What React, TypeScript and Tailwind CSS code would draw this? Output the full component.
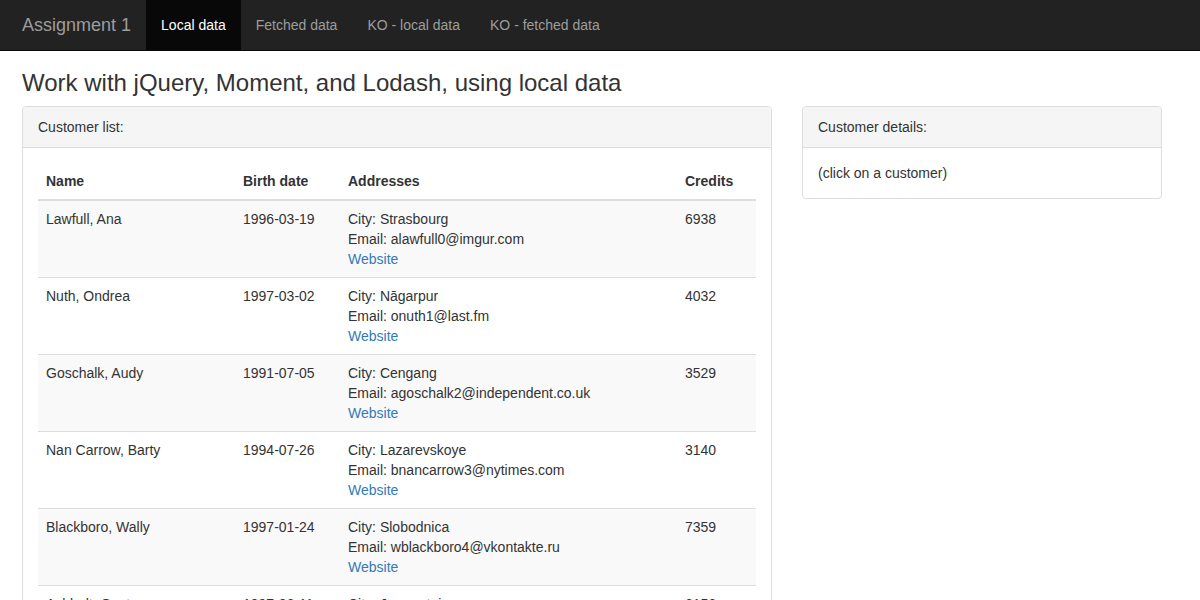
import React from "react";

// Bootstrap 3 look: navbar-inverse + two panels (customer list / details)

type Customer = {
  name: string;
  birth: string;
  city: string;
  email: string;
  credits: number;
};

const customers: Customer[] = [
  { name: "Lawfull, Ana", birth: "1996-03-19", city: "Strasbourg", email: "alawfull0@imgur.com", credits: 6938 },
  { name: "Nuth, Ondrea", birth: "1997-03-02", city: "Nāgarpur", email: "onuth1@last.fm", credits: 4032 },
  { name: "Goschalk, Audy", birth: "1991-07-05", city: "Cengang", email: "agoschalk2@independent.co.uk", credits: 3529 },
  { name: "Nan Carrow, Barty", birth: "1994-07-26", city: "Lazarevskoye", email: "bnancarrow3@nytimes.com", credits: 3140 },
  { name: "Blackboro, Wally", birth: "1997-01-24", city: "Slobodnica", email: "wblackboro4@vkontakte.ru", credits: 7359 },
  { name: "Ashbolt, Gusty", birth: "1997-06-11", city: "Jaramataia", email: "gashbolt5@hatena.ne.jp", credits: 6156 },
];

const navLinks = ["Local data", "Fetched data", "KO - local data", "KO - fetched data"];

export default function App() {
  return (
    <div className="min-h-screen bg-white text-[14px] leading-[20px] text-[#333] font-['Liberation_Sans',Arial,sans-serif]">
      {/* navbar */}
      <nav className="h-[51px] border-b border-[#080808] bg-[#222]">
        <div className="flex h-[50px] pl-[22px]">
          <a className="pr-[15px] text-[18px] leading-[50px] text-[#9d9d9d]">Assignment 1</a>
          {navLinks.map((l, i) => (
            <a
              key={l}
              className={`px-[15px] leading-[50px] ${
                i === 0 ? "bg-[#080808] text-white" : "text-[#9d9d9d]"
              }`}
            >
              {l}
            </a>
          ))}
        </div>
      </nav>

      <div className="px-[22px]">
        <h3 className="mt-[19px] mb-[10px] text-[24px] leading-[26px] font-normal text-[#333]">
          Work with jQuery, Moment, and Lodash, using local data
        </h3>

        <div className="flex items-start gap-[30px]">
          {/* customer list */}
          <div className="w-[750px] rounded-[4px] border border-[#ddd] bg-white">
            <div className="rounded-t-[3px] border-b border-[#ddd] bg-[#f5f5f5] px-[15px] py-[10px]">
              Customer list:
            </div>
            <div className="p-[15px]">
              <table className="w-full table-fixed border-collapse">
                <colgroup>
                  <col className="w-[197px]" />
                  <col className="w-[105px]" />
                  <col className="w-[337px]" />
                  <col />
                </colgroup>
                <thead>
                  <tr>
                    <th className="border-b-2 border-[#ddd] p-[8px] text-left font-bold">Name</th>
                    <th className="border-b-2 border-[#ddd] p-[8px] text-left font-bold">Birth date</th>
                    <th className="border-b-2 border-[#ddd] p-[8px] text-left font-bold">Addresses</th>
                    <th className="border-b-2 border-[#ddd] p-[8px] text-left font-bold">Credits</th>
                  </tr>
                </thead>
                <tbody>
                  {customers.map((c, i) => (
                    <tr key={c.email} className={i % 2 === 0 ? "bg-[#f9f9f9]" : "bg-white"}>
                      <td className={`p-[8px] align-top ${i > 0 ? "border-t border-[#ddd]" : ""}`}>{c.name}</td>
                      <td className={`p-[8px] align-top ${i > 0 ? "border-t border-[#ddd]" : ""}`}>{c.birth}</td>
                      <td className={`p-[8px] align-top ${i > 0 ? "border-t border-[#ddd]" : ""}`}>
                        <div>City: {c.city}</div>
                        <div>Email: {c.email}</div>
                        <a className="text-[#337ab7]">Website</a>
                      </td>
                      <td className={`p-[8px] align-top ${i > 0 ? "border-t border-[#ddd]" : ""}`}>{c.credits}</td>
                    </tr>
                  ))}
                </tbody>
              </table>
            </div>
          </div>

          {/* customer details */}
          <div className="w-[360px] rounded-[4px] border border-[#ddd] bg-white">
            <div className="rounded-t-[3px] border-b border-[#ddd] bg-[#f5f5f5] px-[15px] py-[10px]">
              Customer details:
            </div>
            <div className="p-[15px]">(click on a customer)</div>
          </div>
        </div>
      </div>
    </div>
  );
}
